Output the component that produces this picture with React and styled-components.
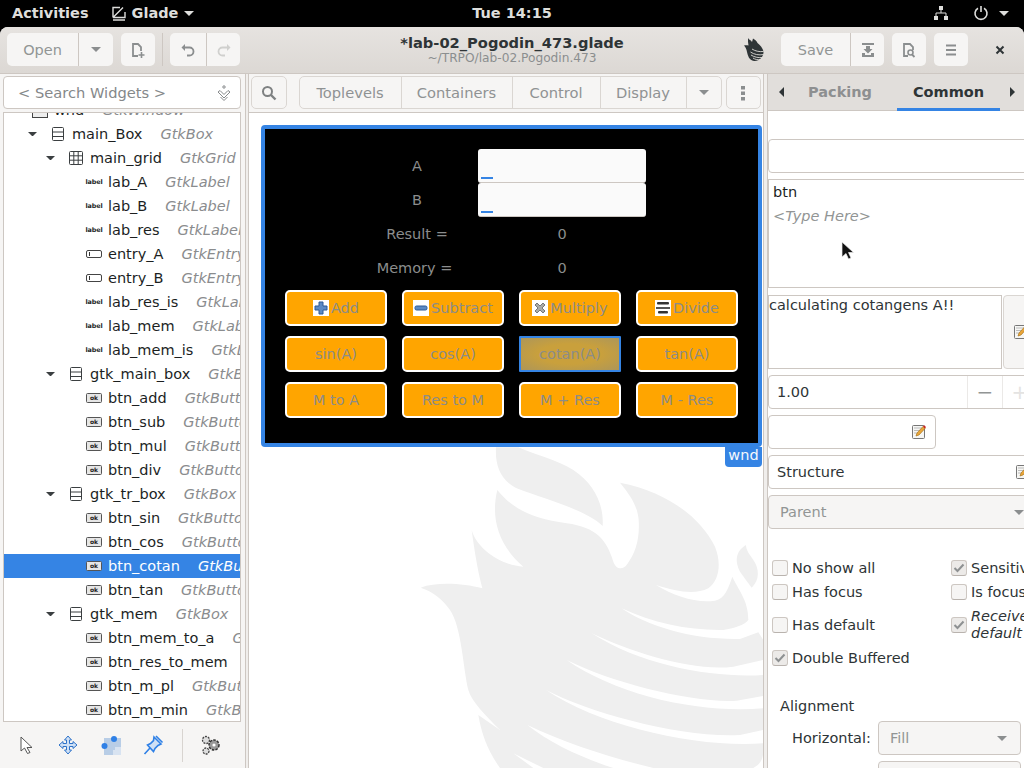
import React from "react";
import styled, { createGlobalStyle } from "styled-components";

const GlobalStyle = createGlobalStyle`
  html, body {
    margin: 0;
    height: 100%;
    overflow: hidden;
    background: #000;
  }
  * {
    box-sizing: border-box;
  }
`;

const Page = styled.div`
  width: 1024px;
  height: 768px;
  display: flex;
  flex-direction: column;
  overflow: hidden;
  font-family: "DejaVu Sans", sans-serif;
  font-size: 14.5px;
  color: #2e3436;
`;

/* gnome top bar */
const TopBar = styled.div`
  height: 27px;
  flex: none;
  display: grid;
  grid-template-columns: 1fr auto 1fr;
  align-items: center;
  padding: 0 12px 1px;
  background: #000;
  color: #dededc;
  font-weight: 700;
  font-size: 14.5px;
`;

const TopLeft = styled.div`
  display: flex;
  align-items: center;
`;

const TopApp = styled.div`
  display: flex;
  align-items: center;
  gap: 6px;
  margin-left: 23px;
`;

const TopRight = styled.div`
  display: flex;
  justify-content: flex-end;
  align-items: center;
  gap: 10px;
  padding-right: 3px;
`;

const TopSpacer = styled.span`
  width: 4px;
`;

const Window = styled.div`
  flex: 1;
  min-height: 0;
  display: flex;
  flex-direction: column;
  background: #f6f5f4;
  border-radius: 8px 8px 0 0;
  overflow: hidden;
`;

const HeaderBar = styled.div`
  height: 47px;
  flex: none;
  display: grid;
  grid-template-columns: 1fr auto 1fr;
  align-items: center;
  padding: 0 7px 1px;
  background: linear-gradient(#e6e3e0, #dcd8d4);
  border-bottom: 1px solid #cdc7c2;
`;

const HeaderSide = styled.div`
  display: flex;
  align-items: center;
  justify-content: ${p => p.end ? "flex-end" : "flex-start"};
`;

const TitleBox = styled.div`
  text-align: center;
  padding-top: 1px;
`;

const Title = styled.div`
  font-weight: 700;
  font-size: 14.67px;
  line-height: 17px;
  color: #2e3436;
`;

const Subtitle = styled.div`
  font-size: 12.2px;
  line-height: 15px;
  color: #8b8e8f;
`;

const HeadGroup = styled.div`
  display: flex;
  height: 33px;
  margin-left: ${p => p.left || 0}px;
  background: #f6f5f4;
  border-radius: 5px;
  color: #929595;
`;

const HeadButton = styled.div`
  width: ${p => p.width}px;
  display: flex;
  align-items: center;
  justify-content: center;
  & + & {
    border-left: 1px solid #cdc7c2;
  }
`;

const HeadSeparator = styled.div`
  width: 1px;
  height: 33px;
  margin-left: 7px;
  background: #cdc7c2;
`;

const CloseBox = styled.div`
  width: 32px;
  margin-left: 16px;
  margin-right: 1px;
  display: flex;
  justify-content: center;
`;

const Body = styled.div`
  flex: 1;
  min-height: 0;
  display: flex;
`;

/* left pane */
const LeftPane = styled.div`
  width: 245px;
  flex: none;
  display: flex;
  flex-direction: column;
  padding: 2px 4px 0 3px;
  background: #f6f5f4;
`;

const SearchEntry = styled.div`
  height: 33px;
  flex: none;
  display: flex;
  align-items: center;
  justify-content: space-between;
  padding: 0 8px 0 14px;
  background: #fff;
  border: 1px solid #cdc7c2;
  border-radius: 4px;
  font-size: 14.67px;
  color: #85888a;
`;

const Tree = styled.div`
  flex: 1;
  min-height: 0;
  margin-top: 3px;
  background: #fff;
  border: 1px solid #cdc7c2;
  overflow: hidden;
`;

const TreeList = styled.div`
  margin-top: -15px;
`;

const TreeRow = styled.div`
  height: 24px;
  display: flex;
  align-items: center;
  white-space: nowrap;
  padding-left: ${p => p.level * 18 + 1}px;
  background: ${p => p.selected ? "#3584e4" : "transparent"};
  color: ${p => p.selected ? "#fff" : "#1c1f1f"};
`;

const ArrowSlot = styled.span`
  width: 18px;
  flex: none;
  display: flex;
  justify-content: center;
`;

const IconSlot = styled.span`
  width: 16px;
  height: 16px;
  flex: none;
  margin: 0 6px 0 9px;
  display: flex;
  align-items: center;
  justify-content: center;
`;

const TinyLabel = styled.span`
  font-size: 6.4px;
  font-weight: 700;
  letter-spacing: -0.1px;
  color: inherit;
`;

const OkIcon = styled.span`
  width: 16px;
  height: 10px;
  display: flex;
  align-items: center;
  justify-content: center;
  border: 1px solid #555;
  border-right-width: 1.5px;
  border-bottom-width: 1.5px;
  border-radius: 1.5px;
  background: #e6e6e6;
  font-size: 6px;
  font-weight: 700;
  line-height: 1;
  color: #222;
`;

const TypeName = styled.span`
  margin-left: 18px;
  font-style: italic;
  color: ${p => p.selected ? "#fff" : "#8a8c8e"};
`;

const BottomTools = styled.div`
  height: 46px;
  flex: none;
  display: flex;
  align-items: center;
  padding-left: 14px;
`;

const ToolSlot = styled.div`
  width: ${p => p.width}px;
  display: flex;
  justify-content: flex-start;
  padding-left: 1px;
`;

const ToolSeparator = styled.div`
  width: 1px;
  height: 33px;
  margin: 0 17px 0 1px;
  background: #d8d4d0;
`;

const Paned = styled.div`
  width: ${p => p.width || 4}px;
  flex: none;
  background: #f0eeec;
  border-left: 1px solid #cdc7c2;
  border-right: 1px solid #cdc7c2;
`;

/* centre pane */
const CenterPane = styled.div`
  width: 514px;
  flex: none;
  display: flex;
  flex-direction: column;
  min-height: 0;
`;

const PaletteBar = styled.div`
  height: 39px;
  flex: none;
  display: flex;
  align-items: flex-start;
  padding: 2px 2px 0 2px;
  background: #f6f5f4;
  border-bottom: 1px solid #cdc7c2;
`;

const PaletteButton = styled.div`
  width: ${p => p.width}px;
  height: 33px;
  margin-left: ${p => p.left || 0}px;
  display: flex;
  align-items: center;
  justify-content: center;
  border: 1px solid #dad6d2;
  border-radius: 5px;
  color: #8b8e8f;
`;

const PaletteTabs = styled.div`
  display: flex;
  height: 33px;
  margin-left: 12px;
  border: 1px solid #dad6d2;
  border-radius: 5px;
  font-size: 14.67px;
  color: #8f9293;
`;

const PaletteTab = styled.div`
  width: ${p => p.width}px;
  display: flex;
  align-items: center;
  justify-content: center;
  & + & {
    border-left: 1px solid #dad6d2;
  }
`;

const Canvas = styled.div`
  position: relative;
  flex: 1;
  min-height: 0;
  padding: 12px 0 0 12px;
  background: #fff;
  overflow: hidden;
`;

const Watermark = styled.svg`
  position: absolute;
  left: 151px;
  top: 327px;
`;

const DesignWindow = styled.div`
  position: relative;
  width: 501px;
  height: 322px;
  padding: 20px 20px 0;
  background: #000;
  border: 4px solid #3584e4;
  border-radius: 4px;
`;

const WindowTag = styled.div`
  position: absolute;
  right: -4px;
  top: 100%;
  margin-top: 4px;
  width: 37px;
  height: 20px;
  background: #3584e4;
  border-radius: 0 0 4px 4px;
  color: #f4f8fd;
  line-height: 17px;
  text-align: center;
`;

const FormGrid = styled.div`
  display: grid;
  grid-template-columns: 122px 168px;
  grid-auto-rows: 34px;
  margin-left: 71px;
`;

const FormText = styled.div`
  display: flex;
  align-items: center;
  justify-content: center;
  padding-right: ${p => p.trim || 0}px;
  color: #8b8d8d;
`;

const DesignEntry = styled.div`
  display: flex;
  align-items: flex-end;
  padding: 0 0 3px 3px;
  background: #fafafa;
  border-radius: 3px;
  border-bottom: 1px solid #cdc7c2;
`;

const EntryProgress = styled.div`
  width: 12px;
  height: 2px;
  background: #3584e4;
`;

const ButtonGrid = styled.div`
  display: grid;
  grid-template-columns: repeat(4, 102px);
  grid-auto-rows: 36px;
  column-gap: 15px;
  row-gap: 10px;
  margin-top: 5px;
`;

const CalcButton = styled.div`
  display: flex;
  align-items: center;
  justify-content: center;
  gap: 2px;
  border: 2px solid ${p => p.focused ? "#3584e4" : "#fff"};
  border-radius: ${p => p.focused ? "1px" : "5px"};
  background: ${p => p.focused ? "radial-gradient(ellipse at center, #c9a03c 45%, #ad9659)" : "#ffa500"};
  color: #8c8c88;
  padding-bottom: 1px;
`;

const StockIcon = styled.span`
  width: 16px;
  height: 16px;
  flex: none;
  background: #fff;
  display: flex;
`;

/* right pane */
const RightPane = styled.div`
  position: relative;
  flex: 1;
  min-width: 0;
  background: #fff;
  overflow: hidden;
`;

const TabStrip = styled.div`
  height: 37px;
  display: flex;
  align-items: stretch;
  background: #e1dedb;
  border-bottom: 1px solid #cdc7c2;
`;

const TabArrow = styled.div`
  width: ${p => p.width}px;
  flex: none;
  display: flex;
  align-items: center;
  justify-content: center;
`;

const Tab = styled.div`
  width: 103px;
  flex: none;
  display: flex;
  align-items: center;
  justify-content: center;
  margin-bottom: -1px;
  padding: 2px ${p => p.active ? 0 : 11}px 0 0;
  font-weight: 700;
  color: ${p => p.active ? "#2e3436" : "#8d8f90"};
  border-bottom: 3px solid ${p => p.active ? "#3584e4" : "transparent"};
`;

const Fields = styled.div`
  display: flex;
  flex-direction: column;
  gap: 6px;
  width: 272px;
  margin-top: 28px;
`;

const Field = styled.div`
  position: relative;
  height: ${p => p.height || 34}px;
  width: ${p => p.width ? p.width + "px" : "100%"};
  flex: none;
  display: flex;
  align-items: center;
  justify-content: space-between;
  padding: 0 8px;
  background: ${p => p.disabled ? "#f6f5f4" : "#fff"};
  color: ${p => p.disabled ? "#929595" : "#2e3436"};
  border: 1px solid #cdc7c2;
  border-radius: 4px;
`;

const FieldText = styled.span`
  margin-left: ${p => p.left || 0}px;
`;

const TypeField = styled.div`
  position: relative;
  height: 109px;
  flex: none;
  padding: 2px 4px;
  border: 1px solid #cdc7c2;
  border-right: none;
  color: #1c1f1f;
  line-height: 20px;
`;

const TypeHint = styled.div`
  margin-top: 4px;
  font-style: italic;
  color: #929595;
`;

const PointerMark = styled.svg`
  position: absolute;
  left: 72px;
  top: 61px;
`;

const DescRow = styled.div`
  height: 74px;
  flex: none;
  display: flex;
  margin-top: 1px;
`;

const DescText = styled.div`
  width: 234px;
  flex: none;
  border: 1px solid #cdc7c2;
  line-height: 19px;
  color: #2e3436;
`;

const DescButton = styled.div`
  flex: 1;
  display: flex;
  align-items: center;
  padding-left: 9px;
  margin-left: 1px;
  background: #f6f5f4;
  border: 1px solid #dad6d2;
  border-radius: 4px 0 0 4px;
`;

const SpinParts = styled.div`
  display: flex;
  align-self: stretch;
  margin-right: -6px;
`;

const SpinButton = styled.div`
  width: 35px;
  display: flex;
  align-items: center;
  justify-content: center;
  border-left: 1px solid #ebe9e7;
  font-size: 20px;
  color: ${p => p.pale ? "#e4e3e2" : "#929595"};
`;

const CaretWrap = styled.span`
  margin-right: 7px;
`;

const CheckGrid = styled.div`
  display: grid;
  grid-template-columns: 179px 200px;
  grid-template-rows: 24px 24px 42px 24px;
  margin: 27px 0 0 4px;
`;

const CheckRow = styled.div`
  display: flex;
  align-items: center;
  gap: 4px;
  white-space: nowrap;
  line-height: 17px;
  font-style: ${p => p.italic ? "italic" : "normal"};
`;

const CheckBox = styled.span`
  width: 16px;
  height: 16px;
  flex: none;
  display: flex;
  align-items: center;
  justify-content: center;
  border: 1px solid #cdc7c2;
  border-bottom-color: #b9b3ae;
  border-radius: 3px;
  background: ${p => p.checked ? "#eceae8" : "#f6f5f4"};
`;

const SectionTitle = styled.div`
  margin: 26px 0 0 12px;
  line-height: 20px;
`;

const AlignRow = styled.div`
  display: flex;
  align-items: center;
  margin: ${p => p.top}px 0 0 24px;
`;

const AlignLabel = styled.div`
  width: 86px;
  flex: none;
`;

const AlignCombo = styled.div`
  width: 143px;
  height: 34px;
  flex: none;
  display: flex;
  align-items: center;
  justify-content: space-between;
  padding: 0 13px 0 11px;
  margin-left: ${p => p.left || 0}px;
  background: #f6f5f4;
  border: 1px solid #cdc7c2;
  border-radius: 4px;
  color: #929595;
`;

const Glyph = ({ size = 16, w, h, children, box }) => (
  <svg
    width={w || size}
    height={h || size}
    viewBox={box || `0 0 ${w || size} ${h || size}`}
    style={{ display: "block", flex: "none" }}
  >
    {children}
  </svg>
);

const Caret = ({ color = "#8b8e8f", dir = "down", size = 5 }) => {
  const pts = {
    down: `0,0 ${size * 2},0 ${size},${size}`,
    left: `${size},0 ${size},${size * 2} 0,${size}`,
    right: `0,0 ${size},${size} 0,${size * 2}`
  };
  const vertical = dir === "down";
  return (
    <Glyph w={vertical ? size * 2 : size} h={vertical ? size : size * 2}>
      <polygon points={pts[dir]} fill={color} />
    </Glyph>
  );
};

const Pencil = () => (
  <Glyph size={16}>
    <rect x="1.5" y="1.5" width="12" height="13" rx="1" fill="#f6f6f4" stroke="#777" />
    <path d="M3 4h8M3 6.5h6M3 9h4" stroke="#bbb" />
    <path d="M5 12l1-3 6-6.5 2 2L8 11z" fill="#e9a63a" stroke="#a06a10" strokeWidth=".6" />
    <path d="M12 2.5l1-1.2 2 1.8-1 1.4z" fill="#cc2222" />
  </Glyph>
);

const BoxIcon = () => (
  <Glyph w={14} h={16}>
    <rect x="1.5" y="1.5" width="11" height="13" rx="1" fill="none" stroke="#3b3f41" />
    <path d="M1.5 6h11M1.5 10.5h11" stroke="#3b3f41" />
  </Glyph>
);

const GridIcon = () => (
  <Glyph size={16}>
    <rect x="1.5" y="1.5" width="13" height="13" rx="1" fill="none" stroke="#3b3f41" />
    <path d="M5.8 1.5v13M10.2 1.5v13M1.5 5.8h13M1.5 10.2h13" stroke="#3b3f41" />
  </Glyph>
);

const EntryIcon = () => (
  <Glyph w={16} h={10}>
    <rect x=".5" y="1.5" width="15" height="7" rx="1.5" fill="#fff" stroke="#444" />
    <path d="M3.5 3v4" stroke="#333" />
  </Glyph>
);

const WindowIcon = () => (
  <Glyph size={16}>
    <rect x=".5" y=".5" width="15" height="15" fill="#eee" stroke="#444" />
    <path d="M.5 4.5h15" stroke="#444" />
  </Glyph>
);

const CheckMark = () => (
  <Glyph w={12} h={10}>
    <path d="M1.5 5l3 3 6-6.5" fill="none" stroke="#8e9192" strokeWidth="2" />
  </Glyph>
);

const PlusStock = () => (
  <Glyph size={16}>
    <path d="M6 2h4v4h4v4h-4v4H6v-4H2V6h4z" fill="#5c8ac4" stroke="#2f5b96" strokeLinejoin="round" />
  </Glyph>
);

const MinusStock = () => (
  <Glyph size={16}>
    <rect x="2" y="6" width="12" height="4" rx="1.5" fill="#5c8ac4" stroke="#2f5b96" />
  </Glyph>
);

const TimesStock = () => (
  <Glyph size={16}>
    <path d="M3 5l2-2 3 3 3-3 2 2-3 3 3 3-2 2-3-3-3 3-2-2 3-3z" fill="#a9aaa6" stroke="#777" />
  </Glyph>
);

const DivideStock = () => (
  <Glyph size={16}>
    <rect x="2" y="2" width="12" height="2.6" rx="1" fill="#333" />
    <path d="M1 7h14v2H1z" fill="#555" />
    <rect x="3" y="11" width="10" height="2.6" rx="1" fill="#333" />
  </Glyph>
);

const flameBody =
  "M292 150C340 210 400 235 500 250C590 262 620 300 640 365C648 388 668 392 682 372C705 340 720 300 716 240C712 195 690 165 660 128C800 155 900 230 945 320C965 370 958 420 925 445C885 465 830 455 768 435C825 470 890 490 945 482C975 475 985 445 997 410C1015 450 1045 480 1045 540C1035 555 1000 565 970 570C870 572 760 550 665 505C745 560 880 600 1020 597L1075 577L1090 600V930C1090 965 1075 975 1060 984H300C265 935 245 885 235 825L300 870C255 825 215 785 205 750C190 690 185 560 150 510C130 480 100 455 62 443C110 425 190 430 247 445C230 380 222 320 215 270C230 325 300 375 370 380C300 320 270 240 292 150Z";

const GladeMark = ({ color, ...rest }) => (
  <Watermark width="370" height="441" viewBox="0 0 1110 1323" {...rest}>
    <path d="M288 22H355C400 42 470 60 520 90C580 130 612 190 608 258C560 210 440 180 350 145C300 120 285 75 288 22Z" fill={color} />
    <path d={flameBody} fill={color} />
    <path d="M1038 315C1005 335 1005 365 1020 395C1035 415 1045 430 1055 443C1080 420 1078 385 1060 360C1048 342 1038 330 1038 315Z" fill={color} />
    <path d="M575 580C700 640 880 695 1000 680L1090 660V705C950 715 730 680 575 580Z" fill="#fff" />
    <path d="M500 660C640 730 880 790 1010 782L1090 768V805C900 820 660 770 500 660Z" fill="#fff" />
    <path d="M438 750C570 820 850 895 1020 885L1090 870V910C900 925 600 860 438 750Z" fill="#fff" />
    <path d="M382 855C500 910 620 950 760 984H640C550 955 450 910 382 855Z" fill="#fff" />
    <path d="M340 940L430 984H400Z" fill="#fff" />
  </Watermark>
);

const SmallGlade = () => (
  <Glyph w={20} h={25} box="0 0 20 25">
    <path
      d="M4 1C5 3 7 3 8 5L9 1.5C11 3 13 4 13.5 6C16 8 19 11 19.5 15C19.5 20 15 24.500 10 24C5 23 4 19 3 15C2.500 12 1.500 10 0 8.500C1.500 8 3 8 4.500 8.500C4 6 3.800 3.500 4 1Z"
      fill="#2e3436"
    />
    <path d="M8 12C11 14 15 15 19.500 14.500M6.500 15C10 17.500 15 18.500 19.500 17.500M7 18C10 20 14 21 18.500 20.500M9 21C11 22.500 14 23 16 22.500" fill="none" stroke="#dfdcd8" strokeWidth=".9" />
  </Glyph>
);

const rows = [
  { level: 0, name: "wnd", type: "GtkWindow", icon: "window" },
  { level: 1, name: "main_Box", type: "GtkBox", icon: "box", open: true },
  { level: 2, name: "main_grid", type: "GtkGrid", icon: "grid", open: true },
  { level: 3, name: "lab_A", type: "GtkLabel", icon: "label" },
  { level: 3, name: "lab_B", type: "GtkLabel", icon: "label" },
  { level: 3, name: "lab_res", type: "GtkLabel", icon: "label" },
  { level: 3, name: "entry_A", type: "GtkEntry", icon: "entry" },
  { level: 3, name: "entry_B", type: "GtkEntry", icon: "entry" },
  { level: 3, name: "lab_res_is", type: "GtkLabel", icon: "label" },
  { level: 3, name: "lab_mem", type: "GtkLabel", icon: "label" },
  { level: 3, name: "lab_mem_is", type: "GtkLabel", icon: "label" },
  { level: 2, name: "gtk_main_box", type: "GtkBox", icon: "box", open: true },
  { level: 3, name: "btn_add", type: "GtkButton", icon: "ok" },
  { level: 3, name: "btn_sub", type: "GtkButton", icon: "ok" },
  { level: 3, name: "btn_mul", type: "GtkButton", icon: "ok" },
  { level: 3, name: "btn_div", type: "GtkButton", icon: "ok" },
  { level: 2, name: "gtk_tr_box", type: "GtkBox", icon: "box", open: true },
  { level: 3, name: "btn_sin", type: "GtkButton", icon: "ok" },
  { level: 3, name: "btn_cos", type: "GtkButton", icon: "ok" },
  { level: 3, name: "btn_cotan", type: "GtkButton", icon: "ok", selected: true },
  { level: 3, name: "btn_tan", type: "GtkButton", icon: "ok" },
  { level: 2, name: "gtk_mem", type: "GtkBox", icon: "box", open: true },
  { level: 3, name: "btn_mem_to_a", type: "GtkButton", icon: "ok" },
  { level: 3, name: "btn_res_to_mem", type: "GtkButton", icon: "ok" },
  { level: 3, name: "btn_m_pl", type: "GtkButton", icon: "ok" },
  { level: 3, name: "btn_m_min", type: "GtkButton", icon: "ok" }
];

const RowIcon = ({ kind }) => {
  if (kind === "box") return <BoxIcon />;
  if (kind === "grid") return <GridIcon />;
  if (kind === "entry") return <EntryIcon />;
  if (kind === "window") return <WindowIcon />;
  if (kind === "ok") return <OkIcon>ok</OkIcon>;
  return <TinyLabel>label</TinyLabel>;
};

const calcButtons = [
  { text: "Add", icon: <PlusStock /> },
  { text: "Subtract", icon: <MinusStock /> },
  { text: "Multiply", icon: <TimesStock /> },
  { text: "Divide", icon: <DivideStock /> },
  { text: "sin(A)" },
  { text: "cos(A)" },
  { text: "cotan(A)", focused: true },
  { text: "tan(A)" },
  { text: "M to A" },
  { text: "Res to M" },
  { text: "M + Res" },
  { text: "M - Res" }
];

const checks = [
  { text: "No show all" },
  { text: "Sensitive", checked: true },
  { text: "Has focus" },
  { text: "Is focus" },
  { text: "Has default" },
  { text: <>Receive<br />default</>, checked: true, italic: true },
  { text: "Double Buffered", checked: true }
];

export default function App() {
  return (
    <Page>
      <GlobalStyle />
      <TopBar>
        <TopLeft>
          Activities
          <TopApp>
            <Glyph w={14} h={16}>
              <path d="M1 15h12M1 12.500h12V7M1 12.500L11 2.500M1 12.500V2.500h7" fill="none" stroke="#dededc" strokeWidth="1.4" />
            </Glyph>
            Glade
            <Caret color="#dededc" />
          </TopApp>
        </TopLeft>
        <div>Tue 14:15</div>
        <TopRight>
          <Glyph size={16}>
            <path d="M6 1h4v4H6zM1 11h4v4H1zM11 11h4v4h-4z" fill="#dededc" />
            <path d="M8 5v3M3 11V8h10v3" fill="none" stroke="#dededc" />
          </Glyph>
          <TopSpacer />
          <Glyph size={16}>
            <path d="M5 3.200a6 6 0 1 0 6 0" fill="none" stroke="#dededc" strokeWidth="1.600" />
            <path d="M8 1v6" stroke="#dededc" strokeWidth="1.600" />
          </Glyph>
          <Caret color="#dededc" />
        </TopRight>
      </TopBar>

      <Window>
        <HeaderBar>
          <HeaderSide>
            <HeadGroup>
              <HeadButton width={71}>Open</HeadButton>
              <HeadButton width={35}><Caret /></HeadButton>
            </HeadGroup>
            <HeadGroup left={8}>
              <HeadButton width={34}>
                <Glyph size={16}>
                  <path d="M11 9V5L8 2H3v12h5" fill="none" stroke="#8b8e8f" strokeWidth="1.800" />
                  <path d="M11.500 10v6M8.500 13h6" stroke="#8b8e8f" strokeWidth="1.600" />
                </Glyph>
              </HeadButton>
            </HeadGroup>
            <HeadSeparator />
            <HeadGroup left={7}>
              <HeadButton width={36}>
                <Glyph size={16}>
                  <path d="M5 2L1.500 5.500L5 9V2z" fill="#8b8e8f" />
                  <path d="M4 5.500h5.500a4 4 0 0 1 0 8H7" fill="none" stroke="#8b8e8f" strokeWidth="1.800" />
                </Glyph>
              </HeadButton>
              <HeadButton width={34}>
                <Glyph size={16}>
                  <path d="M11 2l3.500 3.500L11 9V2z" fill="#d0d0ce" />
                  <path d="M12 5.500H6.500a4 4 0 0 0 0 8H9" fill="none" stroke="#d0d0ce" strokeWidth="1.800" />
                </Glyph>
              </HeadButton>
            </HeadGroup>
          </HeaderSide>
          <TitleBox>
            <Title>*lab-02_Pogodin_473.glade</Title>
            <Subtitle>~/TRPO/lab-02.Pogodin.473</Subtitle>
          </TitleBox>
          <HeaderSide end="true">
            <SmallGlade />
            <HeadGroup left={17}>
              <HeadButton width={69}>Save</HeadButton>
              <HeadButton width={34}>
                <Glyph size={16}>
                  <path d="M2 1h12v2H2zM2 11h3v2h6v-2h3v4H2z" fill="#8b8e8f" />
                  <path d="M6 4h4v3h2.500L8 11.500 3.500 7H6z" fill="#8b8e8f" />
                </Glyph>
              </HeadButton>
            </HeadGroup>
            <HeadGroup left={8}>
              <HeadButton width={34}>
                <Glyph size={16}>
                  <path d="M7 14H3V2h6l3 3v3" fill="none" stroke="#8b8e8f" strokeWidth="1.800" />
                  <circle cx="9.500" cy="10.500" r="2.500" fill="none" stroke="#8b8e8f" strokeWidth="1.600" />
                  <path d="M11 12.500l2.500 2.500" stroke="#8b8e8f" strokeWidth="1.800" />
                </Glyph>
              </HeadButton>
            </HeadGroup>
            <HeadGroup left={8}>
              <HeadButton width={34}>
                <Glyph size={16}>
                  <path d="M3 3.500h10M3 8h10M3 12.500h10" stroke="#8b8e8f" strokeWidth="1.800" />
                </Glyph>
              </HeadButton>
            </HeadGroup>
            <CloseBox>
              <Glyph size={10}>
                <path d="M1.500 1.500l7 7M8.500 1.500l-7 7" stroke="#2e3436" strokeWidth="2" />
              </Glyph>
            </CloseBox>
          </HeaderSide>
        </HeaderBar>

        <Body>
          <LeftPane>
            <SearchEntry>
              {"< Search Widgets >"}
              <Glyph size={16}>
                <circle cx="8" cy="2" r="1.200" fill="none" stroke="#85888a" />
                <path d="M2 7l6 6 6-6-2-1.500-4 4-4-4zM4.500 12L8 15.500 11.500 12" fill="none" stroke="#85888a" />
              </Glyph>
            </SearchEntry>
            <Tree>
              <TreeList>
                {rows.map(r => (
                  <TreeRow key={r.name} level={r.level} selected={r.selected}>
                    <ArrowSlot>{r.open && <Caret color="#3b3f41" size={4.500} />}</ArrowSlot>
                    <IconSlot><RowIcon kind={r.icon} /></IconSlot>
                    {r.name}
                    <TypeName selected={r.selected}>{r.type}</TypeName>
                  </TreeRow>
                ))}
              </TreeList>
            </Tree>
            <BottomTools>
              <ToolSlot width={40}>
                <Glyph size={18}>
                  <path d="M3 1l11 10.500H9l3 5-2.500 1-3-5.500L3 15z" fill="#fff" stroke="#555" />
                </Glyph>
              </ToolSlot>
              <ToolSlot width={43}>
                <Glyph size={20}>
                  <path d="M10 1l3.500 4H11.500v3.500H15V6.500l4 3.500-4 3.500v-2H11.500V15h2L10 19l-3.500-4h2v-3.500H5v2L1 10l4-3.500v2h3.500V5h-2z" fill="#cfe0f5" stroke="#2f73c9" />
                </Glyph>
              </ToolSlot>
              <ToolSlot width={42}>
                <Glyph size={20}>
                  <path d="M3 3h17v17H3z" fill="#b8cde6" />
                  <path d="M14 12h6v8h-8v-5h2z" fill="#fff" opacity=".45" />
                  <circle cx="13" cy="4" r="3" fill="#2f80e6" />
                  <circle cx="3.500" cy="11" r="3" fill="#2f80e6" />
                </Glyph>
              </ToolSlot>
              <ToolSlot width={39}>
                <Glyph size={22}>
                  <path d="M11 3l7 7-3 1.500-3 3-1.500 3L4.500 11l3-1.500 3-3z" fill="#cfe0f5" stroke="#2f80e6" strokeWidth="1.600" />
                  <path d="M13 2l6.500 6.500M7 14l-5.500 6" stroke="#2f80e6" strokeWidth="1.600" />
                </Glyph>
              </ToolSlot>
              <ToolSeparator />
              <Glyph size={22}>
                <circle cx="6" cy="6" r="3.500" fill="#ddd" stroke="#444" strokeWidth="1.300" strokeDasharray="2 1" />
                <circle cx="14" cy="11" r="5" fill="#999" stroke="#333" strokeWidth="1.500" strokeDasharray="2.500 1.200" />
                <circle cx="14" cy="11" r="1.600" fill="#fff" />
                <circle cx="6" cy="17" r="3" fill="#ddd" stroke="#444" strokeWidth="1.300" strokeDasharray="2 1" />
              </Glyph>
            </BottomTools>
          </LeftPane>
          <Paned />

          <CenterPane>
            <PaletteBar>
              <PaletteButton width={36}>
                <Glyph size={16}>
                  <circle cx="6.500" cy="6.500" r="4.500" fill="none" stroke="#7e8182" strokeWidth="2" />
                  <path d="M10 10l4.500 4.500" stroke="#7e8182" strokeWidth="2.400" />
                </Glyph>
              </PaletteButton>
              <PaletteTabs>
                <PaletteTab width={101}>Toplevels</PaletteTab>
                <PaletteTab width={111}>Containers</PaletteTab>
                <PaletteTab width={88}>Control</PaletteTab>
                <PaletteTab width={86}>Display</PaletteTab>
                <PaletteTab width={35}><Caret /></PaletteTab>
              </PaletteTabs>
              <PaletteButton width={36} left={4}>
                <Glyph w={4} h={16}>
                  <path d="M0 1h4v3.500H0zM0 6.500h4V10H0zM0 12h4v3.500H0z" fill="#8b8e8f" />
                </Glyph>
              </PaletteButton>
            </PaletteBar>
            <Canvas>
              <GladeMark color="#efefef" />
              <DesignWindow>
                <FormGrid>
                  <FormText>A</FormText>
                  <DesignEntry><EntryProgress /></DesignEntry>
                  <FormText>B</FormText>
                  <DesignEntry><EntryProgress /></DesignEntry>
                  <FormText>Result =</FormText>
                  <FormText>0</FormText>
                  <FormText trim={5}>Memory =</FormText>
                  <FormText>0</FormText>
                </FormGrid>
                <ButtonGrid>
                  {calcButtons.map(b => (
                    <CalcButton key={b.text} focused={b.focused}>
                      {b.icon && <StockIcon>{b.icon}</StockIcon>}
                      {b.text}
                    </CalcButton>
                  ))}
                </ButtonGrid>
                <WindowTag>wnd</WindowTag>
              </DesignWindow>
            </Canvas>
          </CenterPane>
          <Paned width={5} />

          <RightPane>
            <TabStrip>
              <TabArrow width={26}><Caret color="#2e3436" dir="left" /></TabArrow>
              <Tab>Packing</Tab>
              <Tab active>Common</Tab>
              <TabArrow width={24}><Caret color="#2e3436" dir="right" /></TabArrow>
            </TabStrip>
            <Fields>
              <Field />
              <TypeField>
                btn
                <TypeHint>{"<Type Here>"}</TypeHint>
                <PointerMark width="14" height="20" viewBox="0 0 14 20">
                  <path d="M1 1v15l4-3.500 2.500 5.500 2.500-1-2.500-5.500H12.500z" fill="#111" stroke="#eee" strokeWidth=".7" />
                </PointerMark>
              </TypeField>
              <DescRow>
                <DescText>calculating cotangens A!!</DescText>
                <DescButton><Pencil /></DescButton>
              </DescRow>
              <Field>
                <FieldText>1.00</FieldText>
                <SpinParts>
                  <SpinButton>−</SpinButton>
                  <SpinButton pale>+</SpinButton>
                </SpinParts>
              </Field>
              <Field width={168}>
                <span />
                <Pencil />
              </Field>
              <Field>
                <FieldText>Structure</FieldText>
                <Pencil />
              </Field>
              <Field disabled>
                <FieldText left={3}>Parent</FieldText>
                <CaretWrap><Caret /></CaretWrap>
              </Field>
            </Fields>
            <CheckGrid>
              {checks.map((c, i) => (
                <CheckRow key={i} italic={c.italic}>
                  <CheckBox checked={c.checked}>{c.checked && <CheckMark />}</CheckBox>
                  <span>{c.text}</span>
                </CheckRow>
              ))}
            </CheckGrid>
            <SectionTitle>Alignment</SectionTitle>
            <AlignRow top={5}>
              <AlignLabel>Horizontal:</AlignLabel>
              <AlignCombo>Fill<Caret /></AlignCombo>
            </AlignRow>
            <AlignRow top={6}>
              <AlignCombo left={86} />
            </AlignRow>
          </RightPane>
        </Body>
      </Window>
    </Page>
  );
}
